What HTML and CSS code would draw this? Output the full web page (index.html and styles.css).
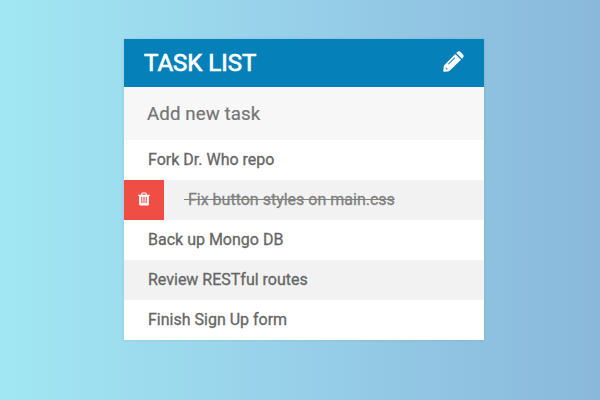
FILE: index.html
```html
<!DOCTYPE html>
<html lang="en">
<head>
<meta charset="utf-8">
<title>Task List</title>
<link rel="stylesheet" href="styles.css">
</head>
<body>
<main class="card">
  <header class="head">
    <h1>Task List</h1>
    <svg class="pencil" viewBox="0 0 21 21"><g fill="#fff"><path fill-rule="evenodd" d="M12.2 2.9L18 8.7 6.9 19.6Q6.1 20.3 5.1 20.4L1.3 20.8Q.2 20.9.3 19.7L.7 15.9Q.8 14.9 1.5 14.1zM11.6 6.3L5.1 12.8l.6.6 6.5-6.5zM2.4 16.7l1.1-.2.2 1 1 .2-.4 1.1-1.2-.9z"/><path d="M13.2 1.9L14.4.9q1.5-1.3 3.1.1l2.4 2.4q1.5 1.5.1 3.1L19 7.7z"/></g></svg>
  </header>
  <input class="new" type="text" placeholder="Add new task">
  <ul class="tasks">
    <li>Fork Dr. Who repo</li>
    <li class="done"><span class="del"><svg class="trash" viewBox="0 0 1408 1536"><path fill="#fff" d="M512 1248V544q0-32-32-32h-64q-32 0-32 32v704q0 32 32 32h64q32 0 32-32zM768 1248V544q0-32-32-32h-64q-32 0-32 32v704q0 32 32 32h64q32 0 32-32zM1024 1248V544q0-32-32-32h-64q-32 0-32 32v704q0 32 32 32h64q32 0 32-32zM480 256h448l-48-117q-7-9-17-11H546q-10 2-17 11zM1408 288v64q0 32-32 32h-96v948q0 83-47 143.500T1120 1536H288q-66 0-113-58.500T128 1336V384H32q-32 0-32-32v-64q0-32 32-32h309l70-167q15-37 54-63t79-26h320q40 0 79 26t54 63l70 167h309q32 0 32 32z"/></svg></span><s>&nbsp;Fix button styles on main.css</s></li>
    <li>Back up Mongo DB</li>
    <li>Review RESTful routes</li>
    <li>Finish Sign Up form</li>
  </ul>
</main>
</body>
</html>
```
FILE: styles.css
```css
* {
  box-sizing: border-box;
}

body {
  margin: 0;
  height: 400px;
  overflow: hidden;
  font-family: Roboto, sans-serif;
  background: linear-gradient(to right, #a1e7f3, #97cfe9 50%, #89b8db);
}

.card {
  width: 360px;
  margin: 39px auto 0 124px;
  background: #f7f7f7;
  box-shadow: 0 0 3px rgba(0, 0, 0, 0.1);
}

.head {
  display: flex;
  align-items: center;
  justify-content: space-between;
  height: 48px;
  padding: 0 20px;
  background: #0680b9;
  color: #fff;
}

h1 {
  margin: 0;
  font-size: 24px;
  font-weight: 400;
  line-height: 48px;
  text-transform: uppercase;
  -webkit-text-stroke: 0.7px;
}

.pencil {
  width: 21px;
  height: 21px;
  margin-bottom: 3px;
}

.new {
  display: block;
  width: 100%;
  height: 53px;
  padding: 0 23px;
  border: 0;
  background: #f7f7f7;
  font: 400 18.7px Roboto, sans-serif;
  letter-spacing: 0.1px;
}

.new::placeholder {
  color: #757575;
  -webkit-text-stroke: 0.2px;
}

.tasks {
  margin: 0;
  padding: 0;
  list-style: none;
}

.tasks li {
  display: flex;
  height: 40px;
  padding-left: 24px;
  background: #fff;
  color: #666;
  font-size: 16px;
  font-weight: 400;
  line-height: 40px;
  -webkit-text-stroke: 0.3px;
}

.tasks li:nth-child(even) {
  background: #f2f2f2;
}

.tasks .done {
  padding-left: 0;
  color: #808080;
}

.del {
  display: flex;
  align-items: center;
  justify-content: center;
  width: 40px;
  margin-right: 20px;
  background: #f04e44;
}

.trash {
  width: 12px;
  height: 14px;
  margin-bottom: 2px;
}
```
